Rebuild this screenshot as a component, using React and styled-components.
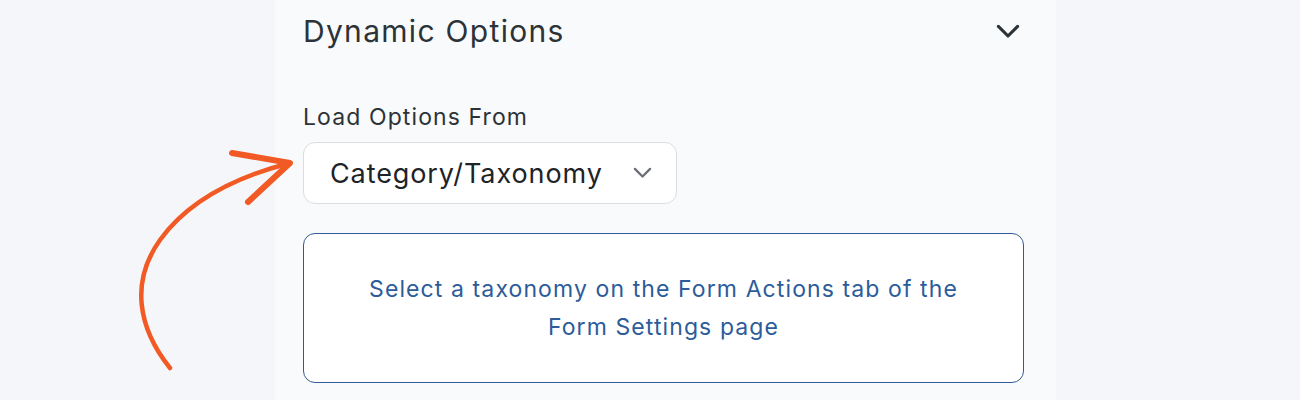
import React from "react";
import styled, { createGlobalStyle } from "styled-components";

const GlobalStyle = createGlobalStyle`
  html, body {
    margin: 0;
    padding: 0;
    background: #f5f6f9;
  }
  body {
    font-family: Inter, "Noto Sans", sans-serif;
  }
`;

const Page = styled.div`
  position: relative;
  height: 400px;
  overflow: hidden;
  display: flex;
  padding-left: 275px;
`;

const Panel = styled.section`
  width: 781px;
  box-sizing: border-box;
  padding: 11px 32px 0 28px;
  background: #f9fafc;
  display: flex;
  flex-direction: column;
`;

const Header = styled.div`
  display: flex;
  align-items: center;
  justify-content: space-between;
  padding-right: 4px;
`;

const Title = styled.h2`
  margin: 0;
  font-size: 30px;
  font-weight: 400;
  line-height: 40px;
  color: #2c3338;
  letter-spacing: 1.3px;
`;

const Label = styled.label`
  margin-top: 51px;
  font-size: 23px;
  line-height: 30px;
  color: #2c3338;
  letter-spacing: 1.1px;
`;

const Select = styled.div`
  margin-top: 10px;
  width: 374px;
  height: 62px;
  box-sizing: border-box;
  display: flex;
  align-items: center;
  justify-content: space-between;
  padding: 0 24px 0 26px;
  background: #ffffff;
  border: 1px solid #dcdde1;
  border-radius: 12px;
  font-size: 27px;
  color: #1d2327;
  letter-spacing: 0.9px;
`;

const Notice = styled.div`
  margin-top: 29px;
  height: 150px;
  box-sizing: border-box;
  display: flex;
  align-items: center;
  justify-content: center;
  padding: 0 30px;
  background: #ffffff;
  border: 1px solid #2c5c9a;
  border-radius: 12px;
  text-align: center;
  font-size: 23px;
  line-height: 38px;
  color: #2c5c9a;
  letter-spacing: 1.1px;
`;

const Arrow = styled.svg`
  position: absolute;
  left: 0;
  top: 0;
  pointer-events: none;
`;

const Chevron = ({ size, color, width }) => (
  <svg width={size} height={size * 0.6} viewBox="0 0 20 12" fill="none">
    <path
      d="M2 2 L10 10 L18 2"
      stroke={color}
      strokeWidth={width}
      strokeLinecap="round"
      strokeLinejoin="round"
    />
  </svg>
);

export default function App() {
  return (
    <>
      <GlobalStyle />
      <Page>
        <Panel>
          <Header>
            <Title>Dynamic Options</Title>
            <Chevron size={24} color="#2c3338" width={2.6} />
          </Header>
          <Label>Load Options From</Label>
          <Select>
            <span>Category/Taxonomy</span>
            <Chevron size={19} color="#6b6f75" width={2.4} />
          </Select>
          <Notice>
            Select a taxonomy on the Form Actions tab of the
            <br />
            Form Settings page
          </Notice>
        </Panel>
        <Arrow width="320" height="400" viewBox="0 0 320 400" fill="none">
          <path
            d="M170 368 C138 328 130 282 160 240 C186 204 232 178 290 163"
            stroke="#f15a24"
            strokeWidth="4.5"
            strokeLinecap="round"
          />
          <path
            d="M232 153 L290 163 L248 202"
            stroke="#f15a24"
            strokeWidth="6"
            strokeLinecap="round"
            strokeLinejoin="round"
          />
        </Arrow>
      </Page>
    </>
  );
}
